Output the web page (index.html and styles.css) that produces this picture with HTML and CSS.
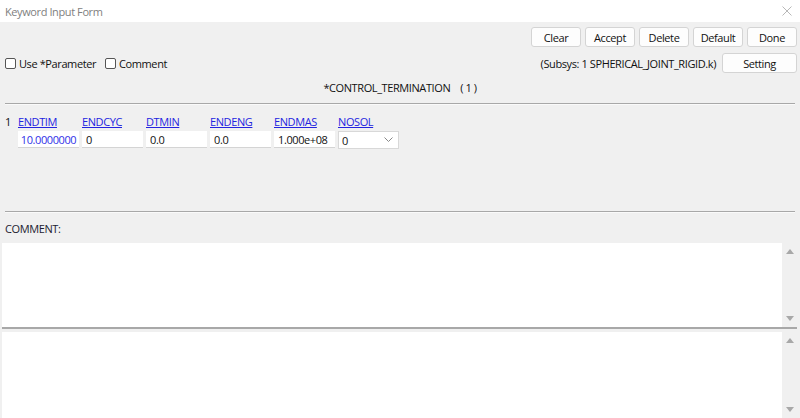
FILE: index.html
```html
<!DOCTYPE html>
<html lang="en">
<head>
  <meta charset="UTF-8">
  <title>Keyword Input Form</title>
  <link rel="stylesheet" href="styles.css">
</head>
<body>
  <div class="window">
    <div class="titlebar">
      <span class="title">Keyword Input Form</span>
      <svg class="close" width="10" height="10" viewBox="0 0 10 10"><path d="M0.5 0.5 L9.5 9.5 M9.5 0.5 L0.5 9.5" stroke="#b8b8b8" stroke-width="1"/></svg>
    </div>
    <div class="toolbar">
      <button class="btn">Clear</button>
      <button class="btn">Accept</button>
      <button class="btn">Delete</button>
      <button class="btn">Default</button>
      <button class="btn">Done</button>
    </div>
    <div class="options">
      <div class="checks">
        <label class="check"><input type="checkbox"> Use *Parameter</label>
        <label class="check"><input type="checkbox"> Comment</label>
      </div>
      <div class="subsys">
        <span>(Subsys: 1 SPHERICAL_JOINT_RIGID.k)</span>
        <button class="btn setting">Setting</button>
      </div>
    </div>
    <div class="kwtitle">*CONTROL_TERMINATION &nbsp;&nbsp; ( 1 )</div>
    <div class="sep"></div>
    <div class="card">
      <span class="rownum">1</span>
      <div class="field"><a class="fname">ENDTIM</a><input class="fval blue" value="10.0000000"></div>
      <div class="field"><a class="fname">ENDCYC</a><input class="fval" value="0"></div>
      <div class="field"><a class="fname">DTMIN</a><input class="fval" value="0.0"></div>
      <div class="field"><a class="fname">ENDENG</a><input class="fval" value="0.0"></div>
      <div class="field"><a class="fname">ENDMAS</a><input class="fval" value="1.000e+08"></div>
      <div class="field"><a class="fname">NOSOL</a>
        <div class="fval select">0
          <svg width="9" height="6" viewBox="0 0 9 6"><path d="M0.5 0.5 L4.5 4.5 L8.5 0.5" fill="none" stroke="#888" stroke-width="1"/></svg>
        </div>
      </div>
    </div>
    <div class="sep"></div>
    <div class="comment-label">COMMENT:</div>
    <div class="textbox">
      <div class="scroll"><span class="up"></span><span class="down"></span></div>
    </div>
    <div class="textbox second">
      <div class="scroll"><span class="up"></span><span class="down"></span></div>
    </div>
  </div>
</body>
</html>
```

FILE: styles.css
```css
body { margin:0; font-family:'Open Sans', 'Noto Sans', Arial, sans-serif; font-size:11px; letter-spacing:-0.4px; color:#111; background:#f0f0f0; }
.window { width:800px; height:418px; overflow:hidden; background:#f0f0f0; }
.titlebar { height:22px; background:#fff; display:flex; align-items:center; justify-content:space-between; padding:0 8px 0 5px; }
.title { color:#808080; }
.btn { background:#fdfdfd; border:1px solid #d4d4d4; border-radius:3px; font-family:inherit; font-size:11px; letter-spacing:-0.4px; color:#111; width:50px; height:20px; padding:0; }
.toolbar { display:flex; justify-content:flex-end; gap:4px; padding:5px 3px 0 0; }
.options { display:flex; justify-content:space-between; align-items:center; margin-top:6px; padding:0 3px 0 5px; height:20px; }
.checks { display:flex; gap:9px; }
.check { display:flex; align-items:center; gap:3px; }
.check input { appearance:none; width:11px; height:11px; margin:0; border:1px solid #555; border-radius:2px; background:#fff; }
.subsys { display:flex; align-items:center; gap:6px; }
.setting { width:75px; }
.kwtitle { height:20px; margin-top:5px; line-height:20px; text-align:center; }
.sep { margin:5px 5px 0 5px; height:1px; background:#a8a8a8; border-bottom:1px solid #fafafa; }
.card { display:flex; gap:3px; height:92px; padding:9px 0 0 5px; }
.rownum { width:10px; }
.field { display:flex; flex-direction:column; width:61px; gap:2px; }
.fname { color:#2424e0; text-decoration:underline; height:15px; line-height:15px; }
.fval { box-sizing:border-box; width:61px; height:17px; border:none; border-bottom:1px solid #d4d4d4; background:#fff; font-family:inherit; font-size:11px; letter-spacing:-0.4px; padding:0 4px; color:#111; }
.fval.blue { color:#3030e8; text-align:center; padding:0; }
.select { display:flex; align-items:center; justify-content:space-between; border:1px solid #d8d8d8; height:18px; padding:0 5px 0 3px; }
.sep + .comment-label { margin-top:8px; }
.comment-label { height:16px; line-height:16px; padding-left:5px; color:#1c1c30; }
.textbox { position:relative; margin:6px 3px 0 2px; height:84px; background:#fff; border-bottom:2px solid #a8a8a8; }
.textbox.second { margin-top:3px; height:86px; }
.scroll { position:absolute; top:0; right:0; bottom:0; width:15px; background:#f0f0f0; display:flex; flex-direction:column; justify-content:space-between; align-items:center; padding:6px 0; box-sizing:border-box; }
.up { width:0; height:0; border-left:4px solid transparent; border-right:4px solid transparent; border-bottom:5px solid #a8a8a8; }
.down { width:0; height:0; border-left:4px solid transparent; border-right:4px solid transparent; border-top:5px solid #a8a8a8; }
```
